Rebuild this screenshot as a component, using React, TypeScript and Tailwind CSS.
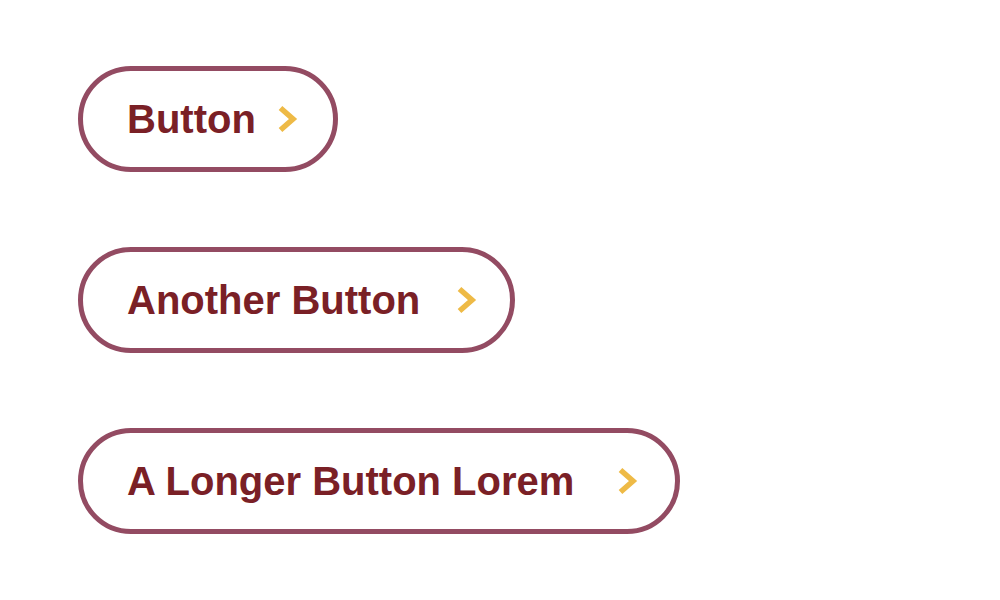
const buttons = [
    { label: 'Button', gap: 'ml-[21px]', pad: 'pr-[35px]' },
    { label: 'Another Button', gap: 'ml-[36px]', pad: 'pr-[33px]' },
    { label: 'A Longer Button Lorem', gap: 'ml-[43px]', pad: 'pr-[37px]' },
];

function Chevron({ className }: { className?: string }) {
    return (
        <svg
            className={className}
            width="21"
            height="28"
            viewBox="0 0 21 28"
            fill="none"
        >
            <path
                d="M3.5 3 L16 14 L3.5 25"
                stroke="#eeba46"
                strokeWidth="5.5"
                strokeLinejoin="miter"
            />
        </svg>
    );
}

export default function App() {
    return (
        <div className="min-h-[600px] w-[1000px] bg-white pl-[78px] pt-[66px] font-['Liberation_Sans',Arial,sans-serif]">
            <div className="flex flex-col items-start gap-[75px]">
                {buttons.map((button) => (
                    <button
                        key={button.label}
                        type="button"
                        className={`flex h-[106px] items-center rounded-full border-[5px] border-[#934b62] bg-white pl-[44px] ${button.pad}`}
                    >
                        <span className="text-[40px] leading-none font-bold text-[#7a2026]">
                            {button.label}
                        </span>
                        <Chevron className={button.gap} />
                    </button>
                ))}
            </div>
        </div>
    );
}
